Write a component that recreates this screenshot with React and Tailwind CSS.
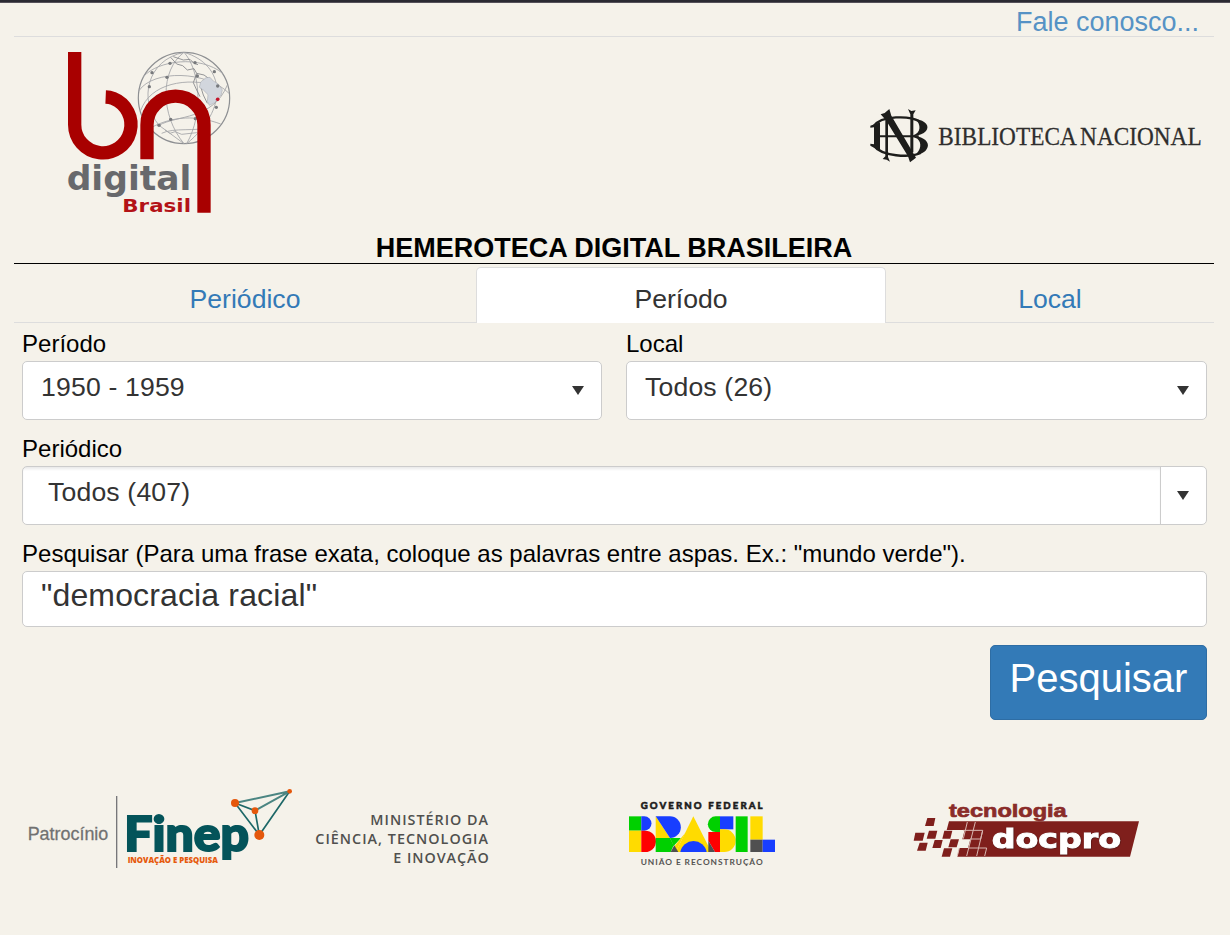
import React from "react";

const RED = "#a80000";

function Arrow() {
  return (
    <svg className="block h-[9px] w-[12px]" viewBox="0 0 12 9">
      <path d="M0 0H12L6 9Z" fill="#333" />
    </svg>
  );
}

function BnDigitalLogo() {
  const nodes = [
    [360, 70], [435, 68], [306, 98], [442, 108], [493, 95], [298, 140], [351, 112],
    [503, 138], [362, 238], [436, 236], [327, 256], [499, 202],
  ];
  return (
    <svg className="block h-[185px] w-[200px]" viewBox="0 0 600 555">
      <g fill="none" stroke="#a3a5a8" strokeWidth="2.6">
        <circle cx="402" cy="174" r="137" stroke="#8d8f92" strokeWidth="3.6" />
        <path d="M280 110C325 60 450 45 518 100" />
        <path d="M267 152C310 88 470 92 537 160" />
        <path d="M272 212C300 130 410 110 503 138" />
        <path d="M327 256C380 225 490 240 532 135" />
        <path d="M305 262C370 228 440 225 512 252" />
        <path d="M402 37C330 90 330 225 402 311" />
        <path d="M402 37C450 90 462 220 410 311" />
        <path d="M402 37C290 60 265 180 327 256L402 311" />
        <path d="M402 37C530 75 535 210 410 311" />
        <path d="M335 280C370 262 440 275 478 262M345 270L360 280L375 275L395 283L440 278L462 285" />
      </g>
      <path
        d="M362 52L380 72L398 77L412 90L432 86L440 100L462 105L480 118M370 50L400 60L420 58L432 70L444 74M440 100L430 128L440 150L450 170M470 118L452 140L460 165L472 190"
        fill="none" stroke="#85878a" strokeWidth="2.6"
      />
      <path
        d="M452 126L468 113L480 112L490 123L505 132L517 150L513 166L500 178L496 187L478 196L472 184L474 164L460 150L448 142Z"
        fill="#d2d6dd" stroke="#9fa3aa" strokeWidth="1.5"
      />
      {nodes.map(([x, y]) => (
        <circle key={`${x}-${y}`} cx={x} cy={y} r="5" fill="#77797c" />
      ))}
      <path d="M74 36V254A84.5 84.5 0 1 0 190 175.500Q179 171.500 167 171" fill="none" stroke={RED} strokeWidth="40" />
      <path d="M291 358V254A85.5 85.5 0 0 1 462 254V518" fill="none" stroke={RED} strokeWidth="40" />
      <circle cx="503" cy="178" r="5.5" fill="#c4122a" />
      <text x="50" y="449" fontSize="100" fontWeight="bold" fontFamily="DejaVu Sans, sans-serif" fill="#68696c" textLength="374" lengthAdjust="spacingAndGlyphs">digital</text>
      <text x="217" y="517" fontSize="55" fontWeight="bold" fontFamily="DejaVu Sans, sans-serif" fill="#b31217" textLength="206" lengthAdjust="spacingAndGlyphs">Brasil</text>
    </svg>
  );
}

function BibliotecaLogo() {
  return (
    <svg className="block h-[80px] w-[360px]" viewBox="0 0 1080 240">
      <g fill="#1d1d1b">
        <path d="M31 92L60 82V168L31 152V146L42 148V97L31 98Z" />
        <path d="M62 58L74 54L88 42L94 62L168 188L150 202L144 184L78 76Z" />
        <path d="M144 42L154 48L167 46L160 58V172H151V58Z" />
        <path d="M76 70H84V186L90 200L80 194L68 192L76 184Z" />
        <path d="M166 72C198 76 210 94 198 108C190 117 178 121 165 123C192 126 208 142 203 156C198 172 182 178 163 181C184 166 186 143 172 131L160 126V121C183 113 184 89 166 72Z" />
      </g>
      <g fill="none" stroke="#1d1d1b" strokeWidth="7">
        <path d="M40 94C64 60 150 62 178 79" />
        <path d="M40 150C65 186 150 188 182 174" />
        <path d="M55 124H176" strokeWidth="6" />
      </g>
      <text x="235" y="150" fontSize="78" fontFamily="Liberation Serif, serif" fill="#2f2e2d" stroke="#2f2e2d" strokeWidth="0.8" wordSpacing="-4" textLength="790" lengthAdjust="spacingAndGlyphs">BIBLIOTECA NACIONAL</text>
    </svg>
  );
}

function FinepLogo() {
  return (
    <svg className="block h-[100px] w-[300px]" viewBox="0 0 900 300">
      <text x="53" y="179" fontSize="55" fontFamily="Liberation Sans, sans-serif" fill="#717171" stroke="#717171" strokeWidth="0.8" textLength="242" lengthAdjust="spacingAndGlyphs">Patrocínio</text>
      <path d="M320 48V264" stroke="#77777a" strokeWidth="4" />
      <text x="343" y="214" fontSize="142" fontWeight="900" fontFamily="Lato, sans-serif" fill="#04545a" stroke="#04545a" strokeWidth="6" textLength="374" lengthAdjust="spacingAndGlyphs">Finep</text>
      <text x="353" y="248" fontSize="24" fontWeight="800" fontFamily="Open Sans, sans-serif" fill="#e65a0c" textLength="271" lengthAdjust="spacingAndGlyphs">INOVAÇÃO E PESQUISA</text>
      <g fill="none" stroke="#1d6767" strokeWidth="5">
        <path d="M675 69L748 165L839 34" />
        <path d="M675 69L735 92L748 165" />
        <path d="M735 92L839 34L675 69" stroke="#4b8582" strokeWidth="6" />
      </g>
      <g fill="#e4570b">
        <circle cx="675" cy="69" r="12" />
        <circle cx="839" cy="34" r="7" />
        <circle cx="735" cy="92" r="10" />
        <circle cx="748" cy="165" r="15" />
      </g>
    </svg>
  );
}

function MinisterioLogo() {
  return (
    <svg className="block h-[90px] w-[210px]" viewBox="0 0 630 270">
      <g fontSize="43" fontWeight="600" fontFamily="Open Sans, sans-serif" fill="#50504e">
        <text x="211" y="104" textLength="353">MINISTÉRIO DA</text>
        <text x="46" y="162" textLength="518">CIÊNCIA, TECNOLOGIA</text>
        <text x="280" y="220" textLength="286">E INOVAÇÃO</text>
      </g>
    </svg>
  );
}

function BrasilLogo() {
  return (
    <svg className="block h-[90px] w-[180px]" viewBox="0 0 540 270">
      <text x="92" y="58" fontSize="29" fontWeight="900" fontFamily="Lato, sans-serif" fill="#1c1c1c" stroke="#1c1c1c" strokeWidth="1.6" textLength="366">GOVERNO FEDERAL</text>
      <path d="M57 79H94V122H57Z" fill="#00d000" />
      <path d="M57 122H94V186H57Z" fill="#ffdb00" />
      <path d="M94 79H103A21.5 21.5 0 0 1 103 122H94Z" fill="#183eff" />
      <path d="M94 122H106A32 32 0 0 1 106 186H94Z" fill="#ff0000" />
      <path d="M137 79L180 144H137Z" fill="#ffdb00" />
      <path d="M137 79H180A32 32 0 0 1 180 144Z" fill="#183eff" />
      <path d="M137 144H180L191 166L182 186H137Z" fill="#00d000" />
      <path d="M180 144H213L191 168Z" fill="#00d000" />
      <path d="M250 79L304 186H197Z" fill="#ffdb00" />
      <path d="M213 144L191 172L205 186H197L225 130Z" fill="#ffdb00" />
      <path d="M193 166L205 186H182Z" fill="#505050" />
      <path d="M211 186A40 39 0 0 1 290 186Z" fill="#183eff" />
      <path d="M330 79H317A23.5 23.5 0 0 0 317 126H330Z" fill="#00d000" />
      <path d="M330 79H370V118H330Z" fill="#183eff" />
      <path d="M295 126H330V186H315L295 152Z" fill="#ff0000" />
      <path d="M295 152L315 186H295Z" fill="#505050" />
      <path d="M330 118H343A34 34 0 0 1 343 186H330Z" fill="#ffdb00" />
      <path d="M377 79H413V186H377Z" fill="#00d000" />
      <path d="M421 79H458V149H421Z" fill="#ffdb00" />
      <path d="M421 149H458V186H421Z" fill="#505050" />
      <path d="M458 149H495V186H458Z" fill="#183eff" />
      <text x="92" y="225" fontSize="25" fontWeight="700" fontFamily="Lato, sans-serif" fill="#555553" textLength="366">UNIÃO E RECONSTRUÇÃO</text>
    </svg>
  );
}

function DocproLogo() {
  return (
    <svg className="block h-[80px] w-[250px]" viewBox="0 0 750 240">
      <path d="M147 94H717L690 200H172L178 174H204L211 148H187L194 120H140Z" fill="#7f1f1c" />
      <g fill="#7f1f1c">
        <path d="M82 84H106L101 108H75Z" />
        <path d="M46 128H74L68 152H41Z" />
        <path d="M87 122H112L106 146H80Z" />
        <path d="M133 122H157L151 146H127Z" />
        <path d="M59 158H83L77 182H51Z" />
        <path d="M104 150H128L122 174H97Z" />
        <path d="M152 148H177L170 172H145Z" />
        <path d="M132 175H157L150 200H125Z" />
      </g>
      <g fill="none" stroke="#d9b8b2" strokeWidth="3">
        <path d="M202 96L190 146M226 96L200 198M248 122L230 198" />
        <path d="M190 121H248L242 147H210M204 174H260L254 198M172 198L178 174" />
      </g>
      <text x="147" y="81" fontSize="55" fontWeight="bold" fontFamily="Liberation Sans, sans-serif" fill="#8a2c29" stroke="#8a2c29" strokeWidth="2" textLength="353" lengthAdjust="spacingAndGlyphs">tecnologia</text>
      <text
        x="275" y="173" fontSize="80" fontWeight="bold" fontFamily="DejaVu Sans, sans-serif" fill="#fff" stroke="#fff" strokeWidth="3"
        textLength="388" lengthAdjust="spacingAndGlyphs" className="[filter:drop-shadow(1px_1px_0px_#35100f)]"
      >
        docpro
      </text>
    </svg>
  );
}

function Label({ children }) {
  return <div className="h-[34px] text-[24px] leading-[34px] tracking-[0.01px] whitespace-nowrap text-black">{children}</div>;
}

function Select({ children }) {
  return (
    <div className="flex h-[59px] justify-between rounded-[5px] border border-[#ccc] bg-white pr-[17px] pl-[18px]">
      <span className="text-[26.6px] leading-[50px] tracking-[0.17px] text-[#333]">{children}</span>
      <span className="pt-[24px]"><Arrow /></span>
    </div>
  );
}

export default function App() {
  return (
    <div className="min-h-[935px] w-[1230px] overflow-hidden bg-[#f5f2ea] font-['Liberation_Sans',Arial,sans-serif]">
      <div className="h-[3px] border-b border-[#55515a] bg-[#2b2a33]" />
      <div className="mr-[16px] ml-[14px] flex h-[34px] justify-end border-b border-[#ddd] pr-[15px]">
        <a className="text-[27px] leading-[38px] text-[#5692c5]">Fale conosco...</a>
      </div>
      <header className="flex h-[195px] items-start justify-between pt-[3px] pr-[10px] pl-[50px]">
        <BnDigitalLogo />
        <div className="pt-[55px]"><BibliotecaLogo /></div>
      </header>
      <h1 className="mr-[16px] ml-[14px] h-[32px] border-b border-black text-center text-[27px] leading-[32px] font-bold text-black">
        HEMEROTECA DIGITAL BRASILEIRA
      </h1>
      <nav className="mt-[3px] mr-[16px] ml-[14px] flex h-[56px] text-center text-[26.6px] text-[#337ab7]">
        <div className="w-[462px] border-b border-[#ddd] leading-[64px]">Periódico</div>
        <div className="w-[410px] rounded-t-[5px] border border-b-0 border-[#ddd] bg-white leading-[62px] text-[#333]">Período</div>
        <div className="w-[328px] border-b border-[#ddd] leading-[64px]">Local</div>
      </nav>
      <main className="pt-[4px] pr-[23px] pl-[22px]">
        <div className="grid grid-cols-[580px_581px] gap-[24px]">
          <div><Label>Período</Label><Select>1950 - 1959</Select></div>
          <div><Label>Local</Label><Select>Todos (26)</Select></div>
        </div>
        <div className="mt-[12px]">
          <Label>Periódico</Label>
          <div className="flex h-[59px] overflow-hidden rounded-[5px] border border-[#ccc] bg-white">
            <div className="grow pl-[25px] text-[26.6px] leading-[50px] tracking-[0.17px] text-[#333] shadow-[inset_0_3px_3px_-1px_rgba(0,0,0,0.09)]">Todos (407)</div>
            <div className="w-[46px] border-l border-[#ccc] pt-[24px] pl-[16px]"><Arrow /></div>
          </div>
        </div>
        <div className="mt-[12px]">
          <Label>Pesquisar (Para uma frase exata, coloque as palavras entre aspas. Ex.: "mundo verde").</Label>
          <div className="h-[56px] rounded-[5px] border border-[#ccc] bg-white pl-[18px] text-[32px] leading-[46px] tracking-[0.14px] text-[#333]">"democracia racial"</div>
        </div>
        <div className="mt-[18px] flex justify-end">
          <button className="h-[75px] w-[217px] rounded-[5px] border border-[#2e6da4] bg-[#337ab7] pb-[9px] text-[40px] leading-[64px] text-white">Pesquisar</button>
        </div>
      </main>
      <footer className="mt-[60px] flex items-start pl-[10px]">
        <FinepLogo />
        <div className="-ml-[10px] pt-[10px]"><MinisterioLogo /></div>
        <div className="ml-[100px] pt-[10px]"><BrasilLogo /></div>
        <div className="ml-[110px] pt-[10px]"><DocproLogo /></div>
      </footer>
    </div>
  );
}
